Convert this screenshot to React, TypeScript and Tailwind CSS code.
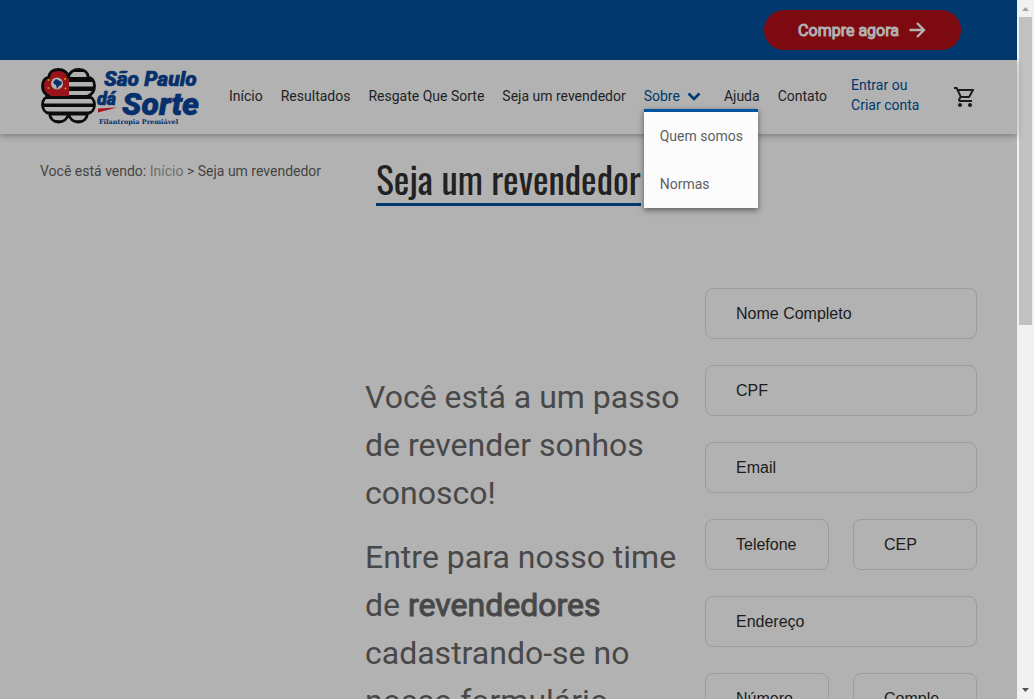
import { MdOutlineShoppingCart } from "react-icons/md";

const linkClass = "whitespace-nowrap text-[#222]";

const cloverPath =
  "M27.500 9C26 3 21 1.500 17 1.500C11 1.500 8 5 8 9C3 10 1.500 14 1.500 18C1.500 23 4 26.500 8 28C3 29.500 1.500 33 1.500 36.500C1.500 41 4 45 8.500 45.500C9 51 13 54 17.500 54C22 54 26 51.500 27.500 46C29 51.500 33 54 37.500 54C42 54 46 51 46.500 45.500C51 45 53.500 41 53.500 36.500C53.500 33 52 29.500 47 28C51 26.500 53.500 23 53.500 18C53.500 14 52 10 47 9C47 5 44 1.500 38 1.500C34 1.500 29 3 27.500 9Z";

function Logo() {
  return (
    <svg viewBox="0 0 160 58" className="h-[58px] w-40 shrink-0" role="img" aria-label="São Paulo dá Sorte">
      <defs>
        <clipPath id="clover">
          <path d={cloverPath} />
        </clipPath>
      </defs>
      <g clipPath="url(#clover)">
        <rect width="55" height="58" fill="#0b0b0b" />
        <path d="M28 4h28v5H28zM28 14h28v4.500H28zM28 23h28v4H28zM0 31h55v4.500H0zM0 39h55v4.500H0zM0 47.500h55v5H0z" fill="#b2b2b2" />
        <rect width="28" height="28" fill="#98141a" />
        <path d="M27.500 44v12" stroke="#0b0b0b" strokeWidth="3" />
      </g>
      <path d={cloverPath} fill="none" stroke="#0b0b0b" strokeWidth="2.800" strokeLinejoin="round" />
      <circle cx="16" cy="15.500" r="6" fill="#b2b2b2" />
      <path d="m12 14 3-3 2 1 4 2-1 3-2 1-2 3-1-4-2-1z" fill="#06306d" />
      <g fill="#c98b18">
        <circle cx="7.500" cy="12" r="1.100" />
        <circle cx="7.500" cy="20" r="1.100" />
        <circle cx="24" cy="11" r="1.100" />
        <circle cx="24.500" cy="20.500" r="1.100" />
      </g>
      <path d="M57 40.500l19-1-19 5z" fill="#a5161c" />
      <g fill="#06306d" stroke="#06306d" strokeWidth=".6" fontFamily="Roboto, sans-serif" fontWeight="900" fontStyle="italic">
        <text x="63" y="18" fontSize="21">São Paulo</text>
        <text x="56" y="37" fontSize="18">dá</text>
        <text x="81" y="47" fontSize="32">Sorte</text>
      </g>
      <text x="58" y="56" fontSize="6.500" fontFamily="DejaVu Serif, serif" fontWeight="700" fill="#06306d">Filantropia Premiável</text>
    </svg>
  );
}

function ArrowIcon() {
  return (
    <svg viewBox="0 0 24 24" className="size-6" fill="none" stroke="currentColor" strokeWidth="2.400" aria-hidden="true">
      <path d="M4.500 12h14M12 5l7 7-7 7" />
    </svg>
  );
}

function ChevronIcon() {
  return (
    <svg viewBox="0 0 24 24" className="size-6" fill="none" stroke="currentColor" strokeWidth="2.600" aria-hidden="true">
      <path d="m6.500 9.500 5.500 5.500 5.500-5.500" />
    </svg>
  );
}

function Field({ label }: { label: string }) {
  return (
    <input
      type="text"
      aria-label={label}
      placeholder={label}
      className="h-[51px] w-full min-w-0 rounded-lg border border-[#9b9b9b] bg-transparent px-[30px] font-['Liberation_Sans',sans-serif] text-base text-[#1c1c1c] outline-none placeholder:text-[#1c1c1c] placeholder:opacity-100"
    />
  );
}

function ScrollTrack() {
  return (
    <div className="flex w-[17px] shrink-0 flex-col items-center bg-[#f1f1f1]" aria-hidden="true">
      <svg viewBox="0 0 17 17" className="h-[17px] w-[17px] shrink-0"><path d="M5 11h7L8.500 7z" fill="#a3a3a3" /></svg>
      <div className="h-[308px] w-[13px] shrink-0 bg-[#c1c1c1]" />
      <svg viewBox="0 0 17 17" className="mt-auto h-[17px] w-[17px] shrink-0"><path d="M5 6h7L8.500 10z" fill="#505050" /></svg>
    </div>
  );
}

export default function App() {
  return (
    <div className="flex h-screen overflow-hidden bg-[#b2b2b2] font-[Roboto,sans-serif]">
      <div className="flex min-w-0 flex-1 flex-col">
        <div className="flex h-[60px] shrink-0 items-center justify-end bg-[#00386d] pr-14">
          <button type="button" className="flex h-10 items-center gap-1.5 rounded-full bg-[#7d0a10] px-8 text-base text-[#b2b2b2]">
            <span className="pt-0.5 pl-0.5 [-webkit-text-stroke:1px_#b2b2b2]">Compre agora</span>
            <ArrowIcon />
          </button>
        </div>

        <header className="relative z-10 flex h-[74px] shrink-0 items-center bg-[#b2b2b2] pr-10 pb-0.5 pl-[41px] text-sm shadow-[0_2px_6px_rgba(0,0,0,0.3)]">
          <a href="#inicio" className="pt-0.5"><Logo /></a>
          <nav className="ml-7 flex items-center gap-[18px]">
            <a href="#inicio" className={linkClass}>Início</a>
            <a href="#resultados" className={linkClass}>Resultados</a>
            <a href="#resgate" className={linkClass}>Resgate Que Sorte</a>
            <a href="#revendedor" className={linkClass}>Seja um revendedor</a>
            <div className="relative">
              <button type="button" aria-expanded="true" className="flex h-6 items-center gap-0.5 text-[#00386d]">
                Sobre
                <ChevronIcon />
              </button>
              <ul className="absolute top-[25px] left-0 w-[114px] border-t-3 border-[#00549f] bg-[#fcfcfc] shadow-[0_2px_6px_rgba(0,0,0,0.5)]">
                <li><a href="#quem-somos" className="flex h-12 items-center px-4 whitespace-nowrap text-[#5f5f5f]">Quem somos</a></li>
                <li><a href="#normas" className="flex h-12 items-center px-4 text-[#5f5f5f]">Normas</a></li>
              </ul>
            </div>
            <a href="#ajuda" className={linkClass}>Ajuda</a>
            <a href="#contato" className={linkClass}>Contato</a>
          </nav>
          <a href="#conta" className="ml-6 pb-0.5 leading-5 whitespace-nowrap text-[#00386d]">Entrar ou<br />Criar conta</a>
          <a href="#carrinho" aria-label="Carrinho" className="ml-auto pt-0.5 text-[#1c1c1c]"><MdOutlineShoppingCart size={24} /></a>
        </header>

        <main className="min-h-0 flex-1 overflow-hidden px-10 pt-6">
          <div className="grid grid-cols-[1fr_auto_1fr] items-start">
            <p className="pt-[3px] text-sm whitespace-nowrap text-[#444]">
              Você está vendo: <a href="#inicio" className="text-[#6f6f6f]">Início</a> &gt; Seja um revendedor
            </p>
            <h1 className="border-b-3 border-[#00386d] pb-1 font-[Oswald,sans-serif] text-[37px] leading-[41px] whitespace-nowrap text-[#222]">
              Seja um revendedor
            </h1>
          </div>

          <section className="mt-[82px] grid grid-cols-[301fr_316fr_272fr] gap-6">
            <div className="col-start-2 flex flex-col gap-4 pt-[85px] text-[32px] leading-12 text-[#484848]">
              <p>Você está a um passo de revender sonhos conosco!</p>
              <p>
                Entre para nosso time de <strong className="font-normal [-webkit-text-stroke:1px_#484848]">revendedores</strong> cadastrando-se no nosso formulário
              </p>
            </div>
            <form className="col-start-3 grid grid-cols-2 gap-x-6 gap-y-[26px] self-start">
              <div className="col-span-2"><Field label="Nome Completo" /></div>
              <div className="col-span-2"><Field label="CPF" /></div>
              <div className="col-span-2"><Field label="Email" /></div>
              <Field label="Telefone" />
              <Field label="CEP" />
              <div className="col-span-2"><Field label="Endereço" /></div>
              <Field label="Número" />
              <Field label="Comple" />
            </form>
          </section>
        </main>
      </div>
      <ScrollTrack />
    </div>
  );
}
